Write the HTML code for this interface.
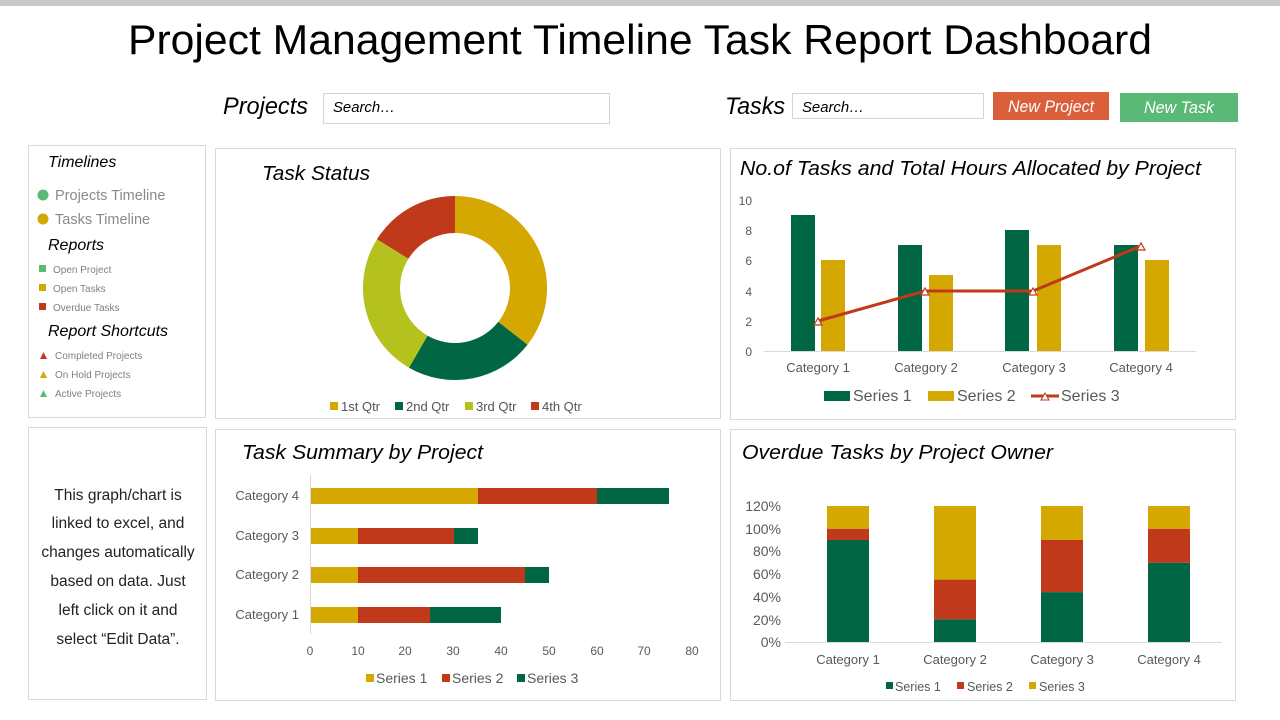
<!DOCTYPE html>
<html><head><meta charset="utf-8"><style>
html,body{margin:0;padding:0;background:#fff;}
svg{display:block;font-family:"Liberation Sans",sans-serif;}
</style></head><body>
<svg width="1280" height="720" viewBox="0 0 1280 720" xmlns="http://www.w3.org/2000/svg">
<rect x="0" y="0" width="1280" height="6" fill="#c8c8c8"/>
<text x="128" y="54" font-size="42" fill="#000" textLength="1024" lengthAdjust="spacingAndGlyphs">Project Management Timeline Task Report Dashboard</text>

<text x="223" y="114" font-size="24" font-style="italic" textLength="85" lengthAdjust="spacingAndGlyphs">Projects</text>
<rect x="323.5" y="93.5" width="286" height="30" fill="#fff" stroke="#d4d4d4"/>
<text x="333" y="112" font-size="15" font-style="italic" textLength="62" lengthAdjust="spacingAndGlyphs">Search…</text>
<text x="725" y="114" font-size="24" font-style="italic" textLength="60" lengthAdjust="spacingAndGlyphs">Tasks</text>
<rect x="792.5" y="93.5" width="191" height="25" fill="#fff" stroke="#d4d4d4"/>
<text x="802" y="112" font-size="15" font-style="italic" textLength="62" lengthAdjust="spacingAndGlyphs">Search…</text>
<rect x="993" y="92" width="116" height="28" fill="#dc5f3c"/>
<text x="1051" y="112" font-size="17" font-style="italic" fill="#fff" text-anchor="middle" textLength="86" lengthAdjust="spacingAndGlyphs">New Project</text>
<rect x="1120" y="93" width="118" height="29" fill="#5bb978"/>
<text x="1179" y="113" font-size="17" font-style="italic" fill="#fff" text-anchor="middle" textLength="70" lengthAdjust="spacingAndGlyphs">New Task</text>

<g fill="none" stroke="#d9d9d9">
<rect x="28.5" y="145.5" width="177" height="272"/>
<rect x="215.5" y="148.5" width="505" height="270"/>
<rect x="730.5" y="148.5" width="505" height="271"/>
<rect x="28.5" y="427.5" width="178" height="272"/>
<rect x="215.5" y="429.5" width="505" height="271"/>
<rect x="730.5" y="429.5" width="505" height="271"/>
</g>

<text x="48" y="167" font-size="16" font-style="italic">Timelines</text>
<circle cx="43" cy="195" r="5.5" fill="#5bb978"/>
<text x="55" y="200" font-size="14.5" fill="#8a8a8a">Projects Timeline</text>
<circle cx="43" cy="219" r="5.5" fill="#d4a800"/>
<text x="55" y="224" font-size="14.5" fill="#8a8a8a">Tasks Timeline</text>
<text x="48" y="250" font-size="16" font-style="italic">Reports</text>
<rect x="39" y="265" width="7" height="7" fill="#5bb978"/>
<text x="53" y="273" font-size="10" fill="#808080">Open Project</text>
<rect x="39" y="284" width="7" height="7" fill="#d4a800"/>
<text x="53" y="292" font-size="10" fill="#808080">Open Tasks</text>
<rect x="39" y="303" width="7" height="7" fill="#c0391b"/>
<text x="53" y="311" font-size="10" fill="#808080">Overdue Tasks</text>
<text x="48" y="336" font-size="16" font-style="italic">Report Shortcuts</text>
<path d="M40 359 L43.5 352 L47 359Z" fill="#c0391b"/>
<text x="55" y="359" font-size="10" fill="#808080">Completed  Projects</text>
<path d="M40 378 L43.5 371 L47 378Z" fill="#d4a800"/>
<text x="55" y="378" font-size="10" fill="#808080">On Hold Projects</text>
<path d="M40 397 L43.5 390 L47 397Z" fill="#5bb978"/>
<text x="55" y="397" font-size="10" fill="#808080">Active Projects</text>

<g font-size="15.5" fill="#222" text-anchor="middle">
<text x="118" y="500">This graph/chart is</text>
<text x="118" y="528">linked to excel, and</text>
<text x="118" y="557">changes automatically</text>
<text x="118" y="586">based on data. Just</text>
<text x="118" y="615">left click on it and</text>
<text x="118" y="644">select “Edit Data”.</text>
</g>

<text x="262" y="180" font-size="20" font-style="italic" textLength="108" lengthAdjust="spacingAndGlyphs">Task Status</text>
<path d="M455 196 A92 92 0 0 1 527.5 344.7 L498.3 321.9 A55 55 0 0 0 455 233Z" fill="#d4a800"/>
<path d="M527.5 344.7 A92 92 0 0 1 409 367.7 L427.5 335.6 A55 55 0 0 0 498.3 321.9Z" fill="#006644"/>
<path d="M409 367.7 A92 92 0 0 1 377 239.2 L408.4 258.8 A55 55 0 0 0 427.5 335.6Z" fill="#b5c21e"/>
<path d="M377 239.2 A92 92 0 0 1 455 196 L455 233 A55 55 0 0 0 408.4 258.8Z" fill="#c0391b"/>
<g font-size="13" fill="#555">
<rect x="330" y="402" width="8" height="8" fill="#d4a800"/><text x="341" y="411">1st Qtr</text>
<rect x="395" y="402" width="8" height="8" fill="#006644"/><text x="406" y="411">2nd Qtr</text>
<rect x="465" y="402" width="8" height="8" fill="#b5c21e"/><text x="476" y="411">3rd Qtr</text>
<rect x="531" y="402" width="8" height="8" fill="#c0391b"/><text x="542" y="411">4th Qtr</text>
</g>

<text x="740" y="175" font-size="20" font-style="italic" textLength="461" lengthAdjust="spacingAndGlyphs">No.of Tasks and Total Hours Allocated by Project</text>
<g font-size="12" fill="#595959" text-anchor="end">
<text x="752" y="205">10</text><text x="752" y="235">8</text><text x="752" y="265">6</text>
<text x="752" y="296">4</text><text x="752" y="326">2</text><text x="752" y="356">0</text>
</g>
<line x1="764" y1="351.5" x2="1196" y2="351.5" stroke="#d9d9d9"/>
<g fill="#006644">
<rect x="791" y="215" width="24" height="136"/><rect x="898" y="245" width="24" height="106"/>
<rect x="1005" y="230" width="24" height="121"/><rect x="1114" y="245" width="24" height="106"/>
</g>
<g fill="#d4a800">
<rect x="821" y="260" width="24" height="91"/><rect x="929" y="275" width="24" height="76"/>
<rect x="1037" y="245" width="24" height="106"/><rect x="1145" y="260" width="24" height="91"/>
</g>
<polyline points="818,321 925,291 1033,291 1141,246" fill="none" stroke="#c0391b" stroke-width="3"/>
<g fill="#fff" stroke="#c0391b" stroke-width="1.2">
<path d="M814 325 L818 318 L822 325Z"/><path d="M921 295 L925 288 L929 295Z"/>
<path d="M1029 295 L1033 288 L1037 295Z"/><path d="M1137 250 L1141 243 L1145 250Z"/>
</g>
<g font-size="13" fill="#595959" text-anchor="middle">
<text x="818" y="372">Category 1</text><text x="926" y="372">Category 2</text>
<text x="1034" y="372">Category 3</text><text x="1141" y="372">Category 4</text>
</g>
<g font-size="16" fill="#595959">
<rect x="824" y="391" width="26" height="10" fill="#006644"/><text x="853" y="401">Series 1</text>
<rect x="928" y="391" width="26" height="10" fill="#d4a800"/><text x="957" y="401">Series 2</text>
<line x1="1031" y1="396" x2="1059" y2="396" stroke="#c0391b" stroke-width="3"/>
<path d="M1041 400 L1045 393 L1049 400Z" fill="#fff" stroke="#c0391b"/>
<text x="1061" y="401">Series 3</text>
</g>

<text x="242" y="459" font-size="20" font-style="italic" textLength="241" lengthAdjust="spacingAndGlyphs">Task Summary  by Project</text>
<line x1="310.5" y1="475" x2="310.5" y2="634" stroke="#d9d9d9"/>
<g font-size="13" fill="#595959" text-anchor="end">
<text x="299" y="500">Category 4</text><text x="299" y="540">Category 3</text>
<text x="299" y="579">Category 2</text><text x="299" y="619">Category 1</text>
</g>
<rect x="311" y="488" width="167" height="16" fill="#d4a800"/><rect x="478" y="488" width="119" height="16" fill="#c0391b"/><rect x="597" y="488" width="72" height="16" fill="#006644"/>
<rect x="311" y="528" width="47" height="16" fill="#d4a800"/><rect x="358" y="528" width="96" height="16" fill="#c0391b"/><rect x="454" y="528" width="24" height="16" fill="#006644"/>
<rect x="311" y="567" width="47" height="16" fill="#d4a800"/><rect x="358" y="567" width="167" height="16" fill="#c0391b"/><rect x="525" y="567" width="24" height="16" fill="#006644"/>
<rect x="311" y="607" width="47" height="16" fill="#d4a800"/><rect x="358" y="607" width="72" height="16" fill="#c0391b"/><rect x="430" y="607" width="71" height="16" fill="#006644"/>
<g font-size="12" fill="#595959" text-anchor="middle">
<text x="310" y="655">0</text><text x="358" y="655">10</text><text x="405" y="655">20</text><text x="453" y="655">30</text>
<text x="501" y="655">40</text><text x="549" y="655">50</text><text x="597" y="655">60</text><text x="644" y="655">70</text><text x="692" y="655">80</text>
</g>
<g font-size="14" fill="#595959">
<rect x="366" y="674" width="8" height="8" fill="#d4a800"/><text x="376" y="683">Series 1</text>
<rect x="442" y="674" width="8" height="8" fill="#c0391b"/><text x="452" y="683">Series 2</text>
<rect x="517" y="674" width="8" height="8" fill="#006644"/><text x="527" y="683">Series 3</text>
</g>

<text x="742" y="459" font-size="20" font-style="italic" textLength="311" lengthAdjust="spacingAndGlyphs">Overdue Tasks by Project Owner</text>
<g font-size="14" fill="#595959" text-anchor="end">
<text x="781" y="511">120%</text><text x="781" y="534">100%</text><text x="781" y="556">80%</text>
<text x="781" y="579">60%</text><text x="781" y="602">40%</text><text x="781" y="625">20%</text><text x="781" y="647">0%</text>
</g>
<line x1="785" y1="642.5" x2="1222" y2="642.5" stroke="#d9d9d9"/>
<rect x="827" y="540" width="42" height="102" fill="#006644"/><rect x="827" y="528.7" width="42" height="11.3" fill="#c0391b"/><rect x="827" y="506" width="42" height="22.7" fill="#d4a800"/>
<rect x="934" y="619.3" width="42" height="22.7" fill="#006644"/><rect x="934" y="579.6" width="42" height="39.7" fill="#c0391b"/><rect x="934" y="506" width="42" height="73.6" fill="#d4a800"/>
<rect x="1041" y="592.1" width="42" height="49.9" fill="#006644"/><rect x="1041" y="540" width="42" height="52.1" fill="#c0391b"/><rect x="1041" y="506" width="42" height="34" fill="#d4a800"/>
<rect x="1148" y="562.7" width="42" height="79.3" fill="#006644"/><rect x="1148" y="528.7" width="42" height="34" fill="#c0391b"/><rect x="1148" y="506" width="42" height="22.7" fill="#d4a800"/>
<g font-size="13" fill="#595959" text-anchor="middle">
<text x="848" y="664">Category 1</text><text x="955" y="664">Category 2</text>
<text x="1062" y="664">Category 3</text><text x="1169" y="664">Category 4</text>
</g>
<g font-size="12.5" fill="#595959">
<rect x="886" y="682" width="7" height="7" fill="#006644"/><text x="895" y="691">Series 1</text>
<rect x="957" y="682" width="7" height="7" fill="#c0391b"/><text x="967" y="691">Series 2</text>
<rect x="1029" y="682" width="7" height="7" fill="#d4a800"/><text x="1039" y="691">Series 3</text>
</g>
</svg>
</body></html>
